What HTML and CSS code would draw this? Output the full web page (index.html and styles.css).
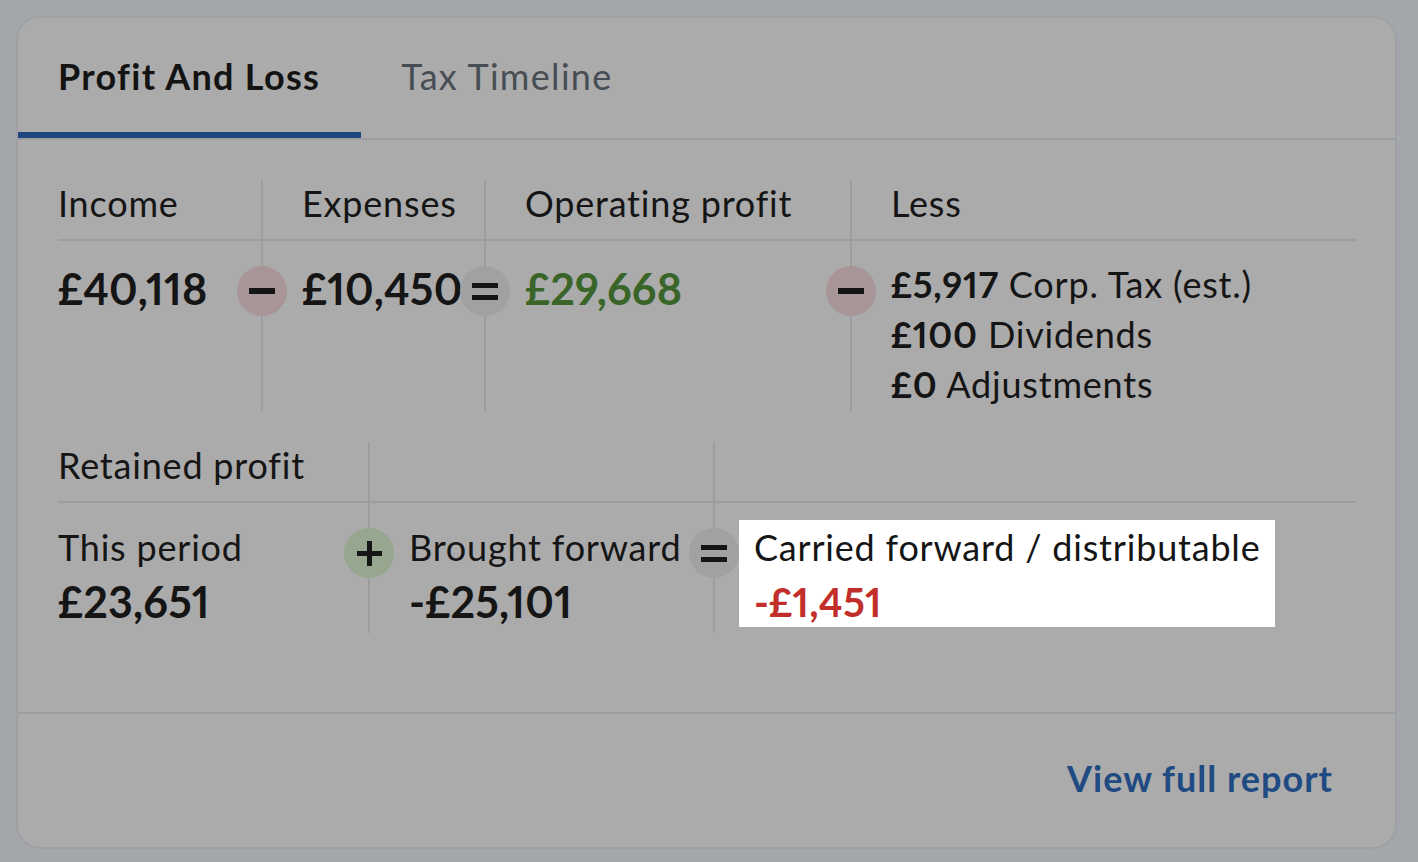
FILE: index.html
```html
<!DOCTYPE html>
<html lang="en">
<head>
<meta charset="utf-8">
<title>Profit And Loss</title>
<link rel="stylesheet" href="styles.css">
</head>
<body>
<div class="card">
  <div class="tabs">
    <div class="tab tab-active">Profit And Loss</div>
    <div class="tab">Tax Timeline</div>
  </div>
  <div class="card-body">
    <div class="calc calc-pl">
      <div class="col">
        <div class="col-head">Income</div>
        <div class="col-main"><div class="amount">£40,118</div></div>
      </div>
      <div class="col col-div">
        <span class="op op-minus"><i class="bar"></i></span>
        <div class="col-head">Expenses</div>
        <div class="col-main"><div class="amount">£10,450</div></div>
      </div>
      <div class="col col-div">
        <span class="op op-equal"><i class="bar"></i><i class="bar"></i></span>
        <div class="col-head">Operating profit</div>
        <div class="col-main"><div class="amount amount-green">£29,668</div></div>
      </div>
      <div class="col col-div">
        <span class="op op-minus"><i class="bar"></i></span>
        <div class="col-head">Less</div>
        <div class="col-main col-list">
          <div class="line"><b>£5,917</b> Corp. Tax (est.)</div>
          <div class="line"><b>£100</b> Dividends</div>
          <div class="line"><b>£0</b> Adjustments</div>
        </div>
      </div>
    </div>

    <div class="calc calc-rp">
      <div class="col">
        <div class="col-head">Retained profit</div>
        <div class="col-main col-stack">
          <div class="line">This period</div>
          <div class="amount">£23,651</div>
        </div>
      </div>
      <div class="col col-div">
        <span class="op op-plus"><i class="bar"></i><i class="bar bar-v"></i></span>
        <div class="col-head"></div>
        <div class="col-main col-stack">
          <div class="line">Brought forward</div>
          <div class="amount">-£25,101</div>
        </div>
      </div>
      <div class="col col-div">
        <span class="op op-equal"><i class="bar"></i><i class="bar"></i></span>
        <div class="col-head"></div>
        <div class="col-main col-stack">
          <div class="spot">
            <div class="line">Carried forward / distributable</div>
            <div class="amount amount-red">-£1,451</div>
          </div>
        </div>
      </div>
    </div>
  </div>
  <div class="card-foot">
    <a class="foot-link" href="#">View full report</a>
  </div>
</div>
</body>
</html>
```

FILE: styles.css
```css
* { box-sizing: border-box; }

html, body {
  margin: 0;
  padding: 0;
  background: #a3a6ab;
}

body {
  padding: 16px 21px 0 16px;
  font-family: "Lato", "Noto Sans", sans-serif;
  font-variant-numeric: proportional-nums;
  color: #151515;
}

.card {
  width: 1381px;
  height: 833px;
  background: #ababab;
  border: 2px solid #9fa0a3;
  border-radius: 24px;
  overflow: hidden;
  display: flex;
  flex-direction: column;
}

/* Tabs */
.tabs {
  display: flex;
  border-bottom: 2px solid #9c9da1;
  height: 122px;
  flex: none;
}

.tab {
  padding: 36px 41px 0 40px;
  font-size: 36px;
  line-height: 44px;
  letter-spacing: 1.3px;
  color: #474d54;
  font-weight: 400;
  white-space: nowrap;
}

.tab-active {
  font-weight: 700;
  color: #131313;
  border-bottom: 6px solid #1f4681;
}

/* Body */
.card-body {
  flex: 1;
  padding: 40px 39px 0 40px;
}

.calc {
  display: grid;
}

.calc-pl {
  grid-template-columns: 203px 223px 366px 1fr;
  height: 231px;
}

.calc-rp {
  grid-template-columns: 310px 345px 1fr;
  height: 191px;
  margin-top: 31px;
}

.col {
  position: relative;
  display: flex;
  flex-direction: column;
  min-width: 0;
}

.col-div {
  border-left: 2px solid #9c9da1;
}

.col-div .col-head,
.col-div .col-main {
  padding-left: 39px;
}

.col-head {
  height: 61px;
  flex: none;
  padding-top: 1px;
  font-size: 36px;
  line-height: 44px;
  letter-spacing: 0.8px;
  border-bottom: 2px solid #9c9da1;
  white-space: nowrap;
}

.col-main {
  flex: 1;
  white-space: nowrap;
}

.calc-pl .col-main {
  padding-top: 23px;
}

.amount {
  font-size: 43px;
  font-weight: 700;
  line-height: 50px;
  letter-spacing: 0.2px;
}

.amount-green { color: #3a6528; }
.amount-red { color: #c22f2a; font-size: 40px; }

.calc-pl .col-list {
  padding-top: 18px;
}

.line {
  font-size: 36px;
  line-height: 48px;
  letter-spacing: 0.8px;
}

.col-list .line {
  line-height: 50px;
}

.line b { font-weight: 700; }

.col-stack {
  padding-top: 20px;
}

.col-stack .amount {
  margin-top: 6px;
}

.spot {
  display: inline-block;
  background: #ffffff;
  margin: -3px 0 0 -15px;
  padding: 3px 15px 0 15px;
}

/* Operator circles */
.op {
  position: absolute;
  left: -26px;
  top: 86px;
  width: 50px;
  height: 50px;
  border-radius: 50%;
  z-index: 2;
  display: flex;
  flex-direction: column;
  align-items: center;
  justify-content: center;
}

.op-minus { background: #a89597; }
.op-equal { background: #a0a2a1; gap: 7px; }
.op-plus { background: #97a68e; }

.bar {
  display: block;
  width: 26px;
  height: 6px;
  background: #151515;
}

.op-equal .bar { height: 5px; }

.op-plus .bar { width: 25px; height: 5px; }

.op-plus .bar-v {
  position: absolute;
  width: 5px;
  height: 25px;
}

/* Footer */
.card-foot {
  flex: none;
  height: 135px;
  border-top: 2px solid #9c9da1;
  display: flex;
  justify-content: flex-end;
  padding: 40px 62px 0 0;
}

.foot-link {
  font-size: 36px;
  line-height: 48px;
  font-weight: 700;
  letter-spacing: 1px;
  color: #1f4a82;
  text-decoration: none;
}
```
